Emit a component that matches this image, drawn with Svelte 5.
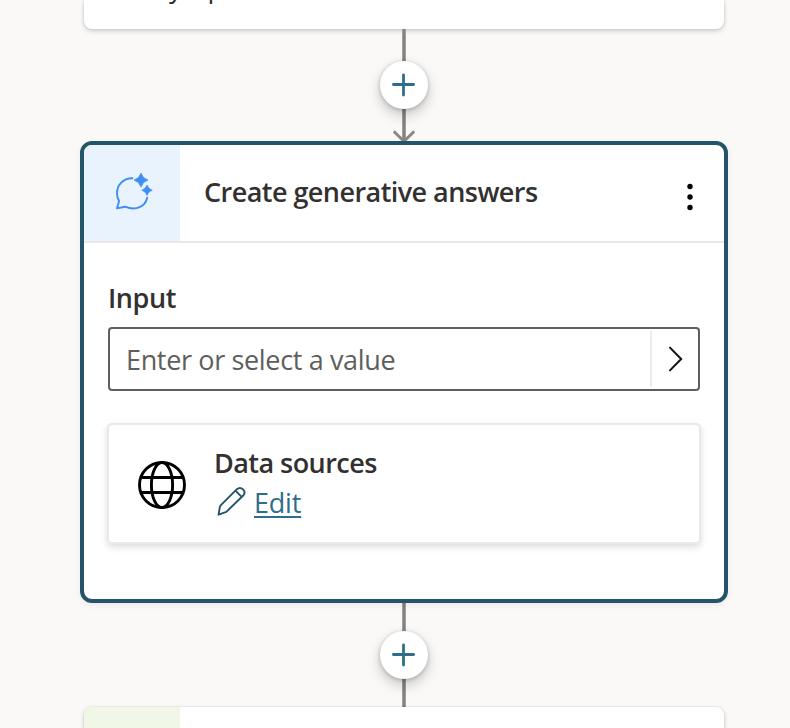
<script>
  const title = 'Create generative answers';
</script>

{#snippet addButton()}
  <button class="add" aria-label="Add node">
    <svg width="24" height="24" viewBox="0 0 24 24">
      <path d="M11.5 1.9V22.1M1.4 11.5H21.6" fill="none" stroke="#2f6e8a" stroke-width="2.8" stroke-linecap="round" />
    </svg>
  </button>
{/snippet}

<main class="canvas">
  <section class="card previous">
    <div class="fragment"><span>y</span><span>p</span></div>
  </section>

  <div class="connector first">
    {@render addButton()}
    <svg class="arrow" width="24" height="14" viewBox="0 0 24 14">
      <path d="M2.7 3.2L12 12.3L21.3 3.2" fill="none" stroke="#8a8886" stroke-width="3" stroke-linecap="round" />
    </svg>
  </div>

  <section class="node">
    <header>
      <div class="tile">
        <svg width="96" height="96" viewBox="0 0 96 96">
          <path d="M48.4 33.2C38.5 33.2 33 40.5 33 48.2C33 51.5 33.9 54 35.1 56.1L33 63.4L41.1 61.7C52.2 66.5 61.5 61.2 63.2 52.8" fill="none" stroke="#3e8df5" stroke-width="1.9" stroke-linejoin="round" stroke-linecap="round" />
          <path d="M57 28.1Q58.6 33.5 64 35.1Q58.6 36.7 57 42.1Q55.4 36.7 50 35.1Q55.4 33.5 57 28.1ZM63 40Q64.2 44 68.2 45.2Q64.2 46.4 63 50.4Q61.8 46.4 57.8 45.2Q61.8 44 63 40Z" fill="#3e8df5" stroke="#3e8df5" stroke-width=".8" stroke-linejoin="round" />
        </svg>
      </div>
      <h1>{title}</h1>
      <button class="more" aria-label="More">
        <svg width="8" height="30" viewBox="0 0 8 30">
          <circle cx="4" cy="4.5" r="2.7" /><circle cx="4" cy="15" r="2.7" /><circle cx="4" cy="25.5" r="2.7" />
        </svg>
      </button>
    </header>

    <div class="body">
      <h2>Input</h2>
      <div class="field">
        <span class="placeholder">Enter or select a value</span>
        <button class="open" aria-label="Select a value">
          <svg width="48" height="56" viewBox="0 0 48 56">
            <path d="M20 16.6L31.2 28L20 39.4" fill="none" stroke="#111" stroke-width="2" stroke-linecap="round" />
          </svg>
        </button>
      </div>

      <div class="sources">
        <svg class="globe" width="48" height="48" viewBox="0 0 48 48" fill="none" stroke="#000" stroke-width="2.9">
          <circle cx="24" cy="24" r="22.5" />
          <ellipse cx="24" cy="24" rx="10.6" ry="22.5" />
          <path d="M3 16.5H45M3 31.5H45" />
        </svg>
        <div class="details">
          <h3>Data sources</h3>
          <div class="edit">
            <svg width="32" height="32" viewBox="0 0 32 32" fill="none" stroke="#235469" stroke-width="1.9" stroke-linejoin="round">
              <path d="M4.6 29.7L5.8 22.2Q6 21 6.9 20.1L22.9 4.2C27 .6 33 6.2 29.2 10.5L13.1 26.1Q12.2 27 11 27.4L4.6 29.7ZM21.5 5.7L27.6 11.9" />
            </svg>
            <span class="link">Edit</span>
          </div>
        </div>
      </div>
    </div>
  </section>

  <div class="connector second">{@render addButton()}</div>

  <section class="card next"><div class="strip"></div></section>
</main>

<style>
  :global(body) { background: #faf9f8; }
  .canvas {
    width: 790px;
    height: 728px;
    overflow: hidden;
    box-sizing: border-box;
    padding-left: 80px;
    background: #faf9f8;
    font-family: "Open Sans", "Noto Sans", sans-serif;
    font-size: 27px;
    color: #323130;
    display: flex;
    flex-direction: column;
  }
  h1, h2, h3 { margin: 0; font-size: 27px; font-weight: 600; white-space: nowrap; }
  button { border: 0; padding: 0; background: none; font: inherit; }
  svg { display: block; flex: none; }
  .card {
    width: 640px;
    margin-left: 4px;
    flex: none;
    background: #fff;
    box-shadow: 0 2px 5px rgba(0, 0, 0, .18), 0 0 2px rgba(0, 0, 0, .14);
  }
  .previous { height: 29px; border-radius: 0 0 8px 8px; }
  .fragment {
    display: flex;
    gap: 25px;
    padding-left: 85px;
    line-height: 36px;
    margin-top: -31px;
  }
  .connector {
    width: 648px;
    flex: none;
    display: flex;
    flex-direction: column;
    align-items: center;
    background: linear-gradient(90deg, #a09e9c 0 1px, #858381 1px 3px, #a09e9c 3px) center / 4px 100% no-repeat;
  }
  .first { height: 80px; padding-top: 32px; }
  .second { height: 76px; padding-top: 28px; }
  .add {
    width: 48px;
    height: 48px;
    flex: none;
    border-radius: 50%;
    background: #fff;
    display: flex;
    align-items: center;
    justify-content: center;
    box-shadow: 0 6px 14px rgba(0, 0, 0, .2), 0 1px 4px rgba(0, 0, 0, .22);
  }
  .arrow { margin-top: 20px; }
  .node {
    width: 648px;
    height: 462px;
    flex: none;
    box-sizing: border-box;
    border: 4px solid #235469;
    border-radius: 12px;
    background: #fff;
    position: relative;
    box-shadow: 0 2px 6px rgba(0, 0, 0, .07);
  }
  header {
    display: flex;
    height: 96px;
    border-bottom: 2px solid #e8e8e8;
  }
  .tile { width: 96px; height: 96px; background: #e8f3fe; border-radius: 8px 0 0 0; overflow: hidden; }
  h1 {
    flex: 1;
    padding-left: 24px;
    line-height: 94px;
    letter-spacing: -.55px;
  }
  .more { width: 8px; margin-right: 30px; padding-top: 8px; }
  .body { padding: 37px 24px 0; }
  h2 { line-height: 36px; letter-spacing: -.4px; }
  .field {
    height: 64px;
    margin-top: 11px;
    box-sizing: border-box;
    border: 2px solid #605e5c;
    border-radius: 4px;
    display: flex;
    align-items: center;
  }
  .placeholder {
    flex: 1;
    padding: 2px 0 0 16px;
    line-height: 36px;
    letter-spacing: -.35px;
    color: #605e5c;
    white-space: nowrap;
  }
  .open { height: 56px; border-left: 2px solid #edebe9; width: 48px; box-sizing: border-box; }
  .open svg { margin-left: -2px; }
  .sources {
    height: 121px;
    margin: 32px -1px 0;
    box-sizing: border-box;
    border: 2px solid #e9e9e9;
    border-radius: 5px;
    box-shadow: 0 3px 7px rgba(0, 0, 0, .14);
    display: flex;
    padding-left: 29px;
  }
  .globe { margin-top: 36px; }
  .details { padding: 19px 0 0 28px; }
  h3 { line-height: 38px; letter-spacing: -.55px; }
  .edit { display: flex; align-items: flex-start; padding-top: 3px; gap: 8px; }
  .link {
    line-height: 36px;
    letter-spacing: -.2px;
    color: #2f6e8a;
    text-decoration: underline;
    text-decoration-thickness: 2px;
    text-underline-offset: 3px;
  }
  .next { height: 60px; border-radius: 8px; overflow: hidden; }
  .strip { width: 96px; height: 60px; background: #f1f7e7; }
</style>
